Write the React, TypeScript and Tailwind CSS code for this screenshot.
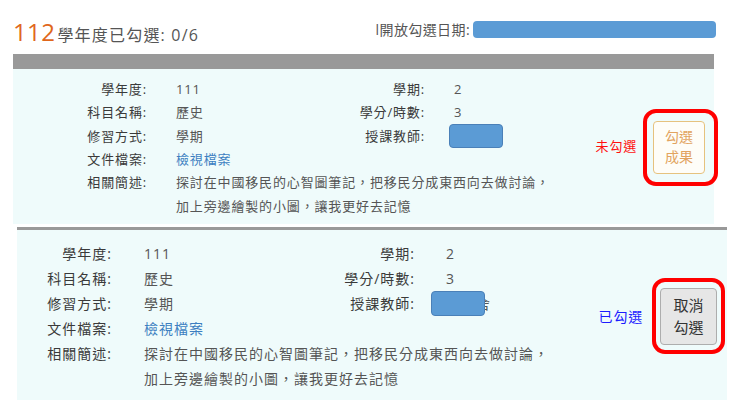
type Course = {
  year: string;
  subject: string;
  term: string;
  credits: string;
  mode: string;
  desc1: string;
  desc2: string;
};

const course: Course = {
  year: '111',
  subject: '歷史',
  term: '2',
  credits: '3',
  mode: '學期',
  desc1: '探討在中國移民的心智圖筆記，把移民分成東西向去做討論，',
  desc2: '加上旁邊繪製的小圖，讓我更好去記憶',
};

function Header() {
  return (
    <div className="flex h-[54px] items-start pl-[13px]">
      <div className="mt-[20px] flex items-baseline">
        <span className="text-[24px] leading-none tracking-[0.4px] text-[#e0671c]">112</span>
        <span className="ml-[2px] text-[16px] leading-none tracking-[1.2px] text-[#555]">學年度已勾選: 0/6</span>
      </div>
      <div className="ml-auto mr-[21px] mt-[21px] flex items-center">
        <span className="text-[14px] leading-none tracking-[0.4px] text-[#555]">l開放勾選日期:</span>
        <span className="ml-[3px] h-[17px] w-[243px] rounded-[4px] bg-[#5b9bd5]" />
      </div>
    </div>
  );
}

// first card: not yet picked
function PendingCard() {
  const c = course;
  return (
    <div className="ml-[13px] flex h-[170px] w-[701px] border-t-[15px] border-[#999] bg-[#effbfb]">
      <div className="mt-[9px] grid grid-cols-[163px_160px_89px_auto] auto-rows-[23.33px] items-center self-start text-[13px] tracking-[0.85px] text-[#3a3a3a]">
        <span className="pr-[29px] text-right">學年度:</span>
        <span className="text-[#555]">{c.year}</span>
        <span className="text-right">學期:</span>
        <span className="pl-[29px] text-[#555]">{c.term}</span>

        <span className="pr-[29px] text-right">科目名稱:</span>
        <span className="text-[#555]">{c.subject}</span>
        <span className="text-right">學分/時數:</span>
        <span className="pl-[29px] text-[#555]">{c.credits}</span>

        <span className="pr-[29px] text-right">修習方式:</span>
        <span className="text-[#555]">{c.mode}</span>
        <span className="text-right">授課教師:</span>
        <span className="pl-[24px]">
          <span className="block h-[24px] w-[54px] rounded-[4px] border border-[#4a80b8] bg-[#5b9bd5]" />
        </span>

        <span className="pr-[29px] text-right">文件檔案:</span>
        <span className="col-span-3 text-[#3d7fc1]">檢視檔案</span>

        <span className="pr-[29px] text-right">相關簡述:</span>
        <span className="col-span-3 whitespace-nowrap text-[#555]">{c.desc1}</span>

        <span />
        <span className="col-span-3 whitespace-nowrap text-[#555]">{c.desc2}</span>
      </div>
      <div className="ml-auto mr-[-4px] mt-[1px] flex items-center self-center">
        <span className="text-[13px] tracking-[0.8px] text-[#ff1010]">未勾選</span>
        <div className="ml-[6px] flex h-[77px] w-[75px] items-center justify-center rounded-[13px] border-[4px] border-[#ff0000] pr-[3px]">
          <button className="flex h-[53px] w-[52px] flex-col items-center justify-center rounded-[4px] border border-[#e6c27e] bg-[#fefdf8] text-[14px] leading-[20px] text-[#e2a460]">
            <span>勾選</span>
            <span>成果</span>
          </button>
        </div>
      </div>
    </div>
  );
}

// second card: already picked
function PickedCard() {
  const c = course;
  return (
    <div className="ml-[17px] mt-[3px] flex h-[173px] w-[710px] border-t-[3px] border-[#999] bg-[#effbfb]">
      <div className="mt-[11px] grid grid-cols-[127px_180px_91px_auto] auto-rows-[25px] items-center self-start text-[14px] tracking-[1px] text-[#3a3a3a]">
        <span className="pr-[32px] text-right">學年度:</span>
        <span className="text-[#555]">{c.year}</span>
        <span className="text-right">學期:</span>
        <span className="pl-[31px] text-[#555]">{c.term}</span>

        <span className="pr-[32px] text-right">科目名稱:</span>
        <span className="text-[#555]">{c.subject}</span>
        <span className="text-right">學分/時數:</span>
        <span className="pl-[31px] text-[#555]">{c.credits}</span>

        <span className="pr-[32px] text-right">修習方式:</span>
        <span className="text-[#555]">{c.mode}</span>
        <span className="text-right">授課教師:</span>
        <span className="flex items-center pl-[16px]">
          <span className="relative z-10 block h-[25px] w-[54px] rounded-[4px] border border-[#4a80b8] bg-[#5b9bd5]" />
          <span className="ml-[-9px] text-[#555]">舍</span>
        </span>

        <span className="pr-[32px] text-right">文件檔案:</span>
        <span className="col-span-3 text-[#3d7fc1]">檢視檔案</span>

        <span className="pr-[32px] text-right">相關簡述:</span>
        <span className="col-span-3 whitespace-nowrap text-[#555]">{c.desc1}</span>

        <span />
        <span className="col-span-3 whitespace-nowrap text-[#555]">{c.desc2}</span>
      </div>
      <div className="ml-auto mr-[2px] mt-[2px] flex items-center self-center">
        <span className="text-[14px] tracking-[0.8px] text-[#1c1cff]">已勾選</span>
        <div className="ml-[9px] flex h-[76px] w-[73px] items-center justify-center rounded-[13px] border-[4px] border-[#ff0000]">
          <button className="flex h-[57px] w-[57px] flex-col items-center justify-center rounded-[4px] border border-[#adadad] bg-[#e6e6e6] text-[15px] leading-[22px] text-[#333]">
            <span>取消</span>
            <span>勾選</span>
          </button>
        </div>
      </div>
    </div>
  );
}

export default function App() {
  return (
    <div className="h-[400px] w-[737px] overflow-hidden bg-white font-['Open_Sans','Noto_Sans_CJK_TC',sans-serif]">
      <Header />
      <PendingCard />
      <PickedCard />
    </div>
  );
}
